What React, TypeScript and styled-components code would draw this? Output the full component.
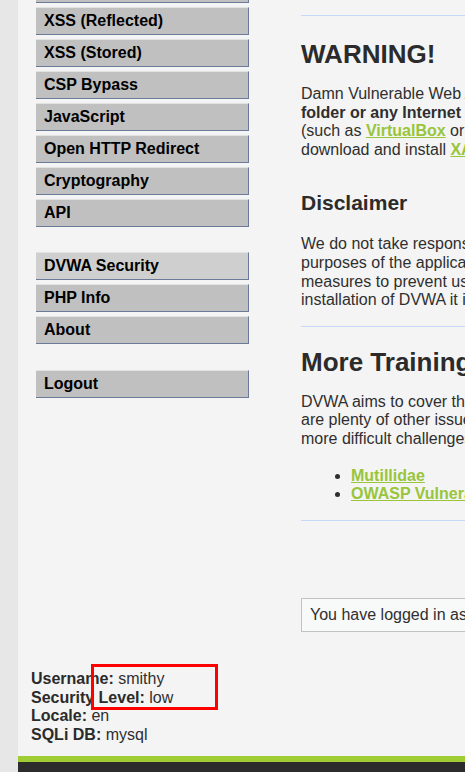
import React from "react";
import styled, { createGlobalStyle } from "styled-components";

const Global = createGlobalStyle`
  html, body { margin: 0; padding: 0; background: #e7e7e7; overflow: hidden; }
  body { font-family: "Liberation Sans", Arial, Helvetica, sans-serif; font-size: 16px; color: #2f2f2f; }
`;

const Page = styled.div`
  margin-left: 18px;
  width: 1400px;
  height: 772px;
  background: #f4f4f4;
  display: flex;
  flex-direction: column;
`;

const Main = styled.div`
  display: flex;
  align-items: flex-start;
`;

const Menu = styled.nav`
  flex: 0 0 213px;
  margin-left: 18px;
  margin-top: -25px;
`;

const Block = styled.ul<{ $gap: number }>`
  list-style: none;
  margin: 0 0 ${(p) => p.$gap}px;
  padding: 0;
`;

const Item = styled.li<{ $selected?: boolean }>`
  margin-bottom: 4px;
  padding: 4px 0 4px 8px;
  line-height: 18px;
  font-size: 16px;
  font-weight: bold;
  color: #000;
  background: ${(p) => (p.$selected ? "#cfcfcf" : "#c0c0c0")};
  border-top: 1px solid #e2e2e2;
  border-right: 1px solid #6b7a99;
  border-bottom: 1px solid #6b7a99;
`;

const Content = styled.main`
  margin-left: 52px;
  flex: 0 0 1050px;
  padding-top: 15px;
`;

const Rule = styled.hr<{ $mb: number }>`
  border: 0;
  border-top: 1px solid #c7d9f7;
  margin: 0 0 ${(p) => p.$mb}px;
  height: 0;
`;

const H1 = styled.h1<{ $mt: number }>`
  font-size: 26px;
  line-height: 29px;
  font-weight: bold;
  color: #2b2b2b;
  margin: ${(p) => p.$mt}px 0 15px;
`;

const H2 = styled.h2`
  font-size: 21px;
  line-height: 24px;
  font-weight: bold;
  color: #2b2b2b;
  margin: 32px 0 19px;
`;

const Para = styled.p<{ $mb: number }>`
  margin: 0 0 ${(p) => p.$mb}px;
  padding-top: 1px;
  line-height: 18.6px;
  white-space: nowrap;
`;

const Link = styled.a`
  color: #98c53a;
  font-weight: bold;
  text-decoration: underline;
`;

const List = styled.ul`
  margin: 0 0 16px;
  padding-left: 50px;
  line-height: 18.6px;
`;

const LoggedBox = styled.div`
  margin-top: 77px;
  padding: 6px 8px 7px;
  line-height: 19px;
  border: 1px solid #c2c2c2;
  background: #f8f9f9;
  color: #2f2f2f;
`;

const SystemInfo = styled.div`
  position: relative;
  margin-top: 38px;
  padding-left: 13px;
  line-height: 18.8px;
  color: #2f2f2f;
`;

const Label = styled.b`
  color: #2b2b2b;
`;

const Highlight = styled.div`
  position: absolute;
  left: 73px;
  top: -6px;
  width: 127px;
  height: 46px;
  box-sizing: border-box;
  border: 3px solid #ff0000;
`;

const Footer = styled.footer`
  margin-top: auto;
  height: 10px;
  border-top: 6px solid #a0cc34;
  background: #2c2c2c;
`;

export default function App() {
  return (
    <>
      <Global />
      <Page>
        <Main>
          <Menu>
            <Block $gap={25}>
              <Item>XSS (DOM)</Item>
              <Item>XSS (Reflected)</Item>
              <Item>XSS (Stored)</Item>
              <Item>CSP Bypass</Item>
              <Item>JavaScript</Item>
              <Item>Open HTTP Redirect</Item>
              <Item>Cryptography</Item>
              <Item>API</Item>
            </Block>
            <Block $gap={26}>
              <Item $selected>DVWA Security</Item>
              <Item>PHP Info</Item>
              <Item>About</Item>
            </Block>
            <Block $gap={25}>
              <Item>Logout</Item>
            </Block>
          </Menu>
          <Content>
            <Rule $mb={0} />
            <H1 $mt={24}>WARNING!</H1>
            <Para $mb={0}>
              Damn Vulnerable Web Application is damn vulnerable! <b>Do not upload it to your hosting provider's public html</b>
              <br />
              <b>folder or any Internet facing servers</b>, as they will be compromised. It is recommend using a virtual machine
              <br />
              (such as <Link href="#">VirtualBox</Link> or <Link href="#">VMware</Link>), which is set to NAT networking mode. Inside a guest machine, you can
              <br />
              download and install <Link href="#">XAMPP</Link> for the web server and database.
            </Para>
            <H2>Disclaimer</H2>
            <Para $mb={16}>
              We do not take responsibility for the way in which any one uses this application (DVWA). We have made the
              <br />
              purposes of the application clear and it should not be used maliciously. We have given warnings and taken
              <br />
              measures to prevent users from installing DVWA on to live web servers. If your web server is compromised via an
              <br />
              installation of DVWA it is not our responsibility it is the responsibility of the person/s who uploaded and installed it.
            </Para>
            <Rule $mb={0} />
            <H1 $mt={21}>More Training Resources</H1>
            <Para $mb={18}>
              DVWA aims to cover the most commonly seen vulnerabilities found in today's web applications. However there
              <br />
              are plenty of other issues with web applications. Should you wish to explore any additional attack vectors, or want
              <br />
              more difficult challenges, you may wish to look into the following other projects:
            </Para>
            <List>
              <li>
                <Link href="#">Mutillidae</Link>
              </li>
              <li>
                <Link href="#">OWASP Vulnerable Web Applications Directory</Link>
              </li>
            </List>
            <Rule $mb={0} />
            <LoggedBox>You have logged in as 'smithy'</LoggedBox>
          </Content>
        </Main>
        <SystemInfo>
          <div>
            <Label>Username:</Label> smithy
          </div>
          <div>
            <Label>Security Level:</Label> low
          </div>
          <div>
            <Label>Locale:</Label> en
          </div>
          <div>
            <Label>SQLi DB:</Label> mysql
          </div>
          <Highlight />
        </SystemInfo>
        <Footer />
      </Page>
    </>
  );
}
